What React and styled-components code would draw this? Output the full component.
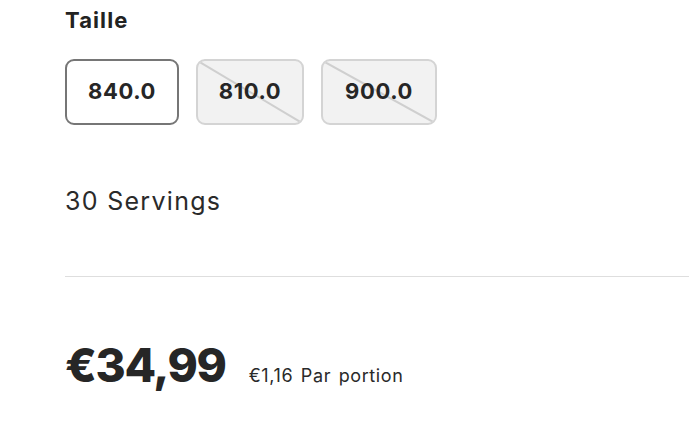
import React from 'react';
import styled, { createGlobalStyle } from 'styled-components';

const GlobalStyle = createGlobalStyle`
  html, body {
    margin: 0;
    padding: 0;
    background: #ffffff;
  }
  body {
    font-family: 'Inter', 'Liberation Sans', sans-serif;
    color: #222222;
  }
`;

const Page = styled.div`
  padding: 5px 0 0 65px;
  overflow: hidden;
`;

const Label = styled.div`
  font-size: 22px;
  font-weight: 700;
  line-height: 30px;
  letter-spacing: 1.1px;
  color: #222;
`;

const Options = styled.div`
  display: flex;
  gap: 17px;
  margin-top: 24px;
`;

const SizeButton = styled.button`
  position: relative;
  height: 66px;
  width: ${(p) => p.$width}px;
  box-sizing: border-box;
  border-radius: 9px;
  border: 2px solid ${(p) => (p.$selected ? '#767676' : '#d4d4d4')};
  background: ${(p) => (p.$disabled ? '#f2f2f2' : '#ffffff')};
  font-family: inherit;
  font-size: 22px;
  font-weight: 700;
  letter-spacing: 0.6px;
  color: #262626;
  overflow: hidden;
  padding: 0 0 2px 0;
  cursor: ${(p) => (p.$disabled ? 'default' : 'pointer')};
`;

const Strike = styled.svg`
  position: absolute;
  inset: 0;
  width: 100%;
  height: 100%;
  pointer-events: none;
`;

const ButtonText = styled.span`
  position: relative;
`;

const Servings = styled.div`
  margin-top: 59px;
  font-size: 25px;
  font-weight: 400;
  letter-spacing: 1.3px;
  color: #2a2a2a;
  line-height: 34px;
`;

const Divider = styled.hr`
  border: none;
  border-top: 1px solid #dedede;
  margin: 58px 0 0 0;
`;

const PriceRow = styled.div`
  display: flex;
  align-items: baseline;
  gap: 23px;
  margin-top: 60px;
`;

const Price = styled.div`
  font-size: 46px;
  font-weight: 800;
  letter-spacing: -1.3px;
  color: #262626;
`;

const Unit = styled.div`
  font-size: 18px;
  letter-spacing: 0.6px;
  word-spacing: 2px;
  color: #2a2a2a;
`;

const sizes = [
  { value: '840.0', width: 114, selected: true },
  { value: '810.0', width: 108, disabled: true },
  { value: '900.0', width: 116, disabled: true },
];

export default function App() {
  return (
    <Page>
      <GlobalStyle />
      <Label>Taille</Label>
      <Options>
        {sizes.map((s) => (
          <SizeButton
            key={s.value}
            $width={s.width}
            $selected={s.selected}
            $disabled={s.disabled}
          >
            {s.disabled && (
              <Strike viewBox="0 0 100 100" preserveAspectRatio="none">
                <line x1="0" y1="0" x2="100" y2="100" stroke="#cfcfcf" strokeWidth="2" vectorEffect="non-scaling-stroke" />
              </Strike>
            )}
            <ButtonText>{s.value}</ButtonText>
          </SizeButton>
        ))}
      </Options>
      <Servings>30 Servings</Servings>
      <Divider />
      <PriceRow>
        <Price>€34,99</Price>
        <Unit>€1,16 Par portion</Unit>
      </PriceRow>
    </Page>
  );
}
